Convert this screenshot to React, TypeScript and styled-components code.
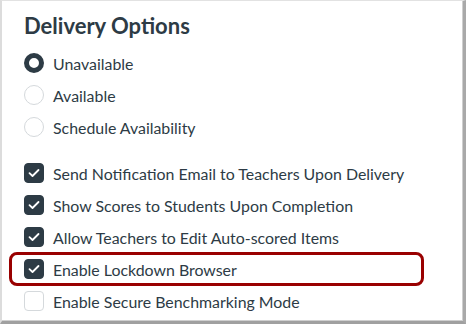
import React from "react";
import styled, { createGlobalStyle } from "styled-components";

const Global = createGlobalStyle`
  html, body { margin: 0; padding: 0; background: #ffffff; }
  body { font-family: Lato, "Noto Sans", sans-serif; }
`;

const Frame = styled.div`
  box-sizing: border-box;
  width: 466px;
  height: 324px;
  background: #fff;
  border-top: 1px solid #e2e2e2;
  border-left: 2px solid #dcdcdc;
  border-right: 3px solid #a9a9a9;
  border-bottom: 3px solid #a0a0a0;
  box-shadow: inset -1px -1px 0 #cfcfcf;
  padding: 11px 0 0 22px;
  color: #2d3b45;
  overflow: hidden;
`;

const Title = styled.h2`
  margin: 0 0 7px 0;
  font-size: 22px;
  line-height: 28px;
  font-weight: 700;
  color: #2d3b45;
`;

const Group = styled.div`
  display: flex;
  flex-direction: column;
`;

const Row = styled.div`
  display: flex;
  align-items: center;
  gap: 9px;
  height: 32px;
  font-size: 15.9px;
  color: #2d3b45;
  position: relative;
`;

const Highlight = styled.div`
  position: absolute;
  left: -15px;
  top: -1px;
  width: 415px;
  height: 34px;
  box-sizing: border-box;
  border: 3px solid #990000;
  border-radius: 8px;
  pointer-events: none;
`;

const Radio = styled.span<{ $checked?: boolean }>`
  box-sizing: border-box;
  width: 20px;
  height: 20px;
  border-radius: 50%;
  flex: none;
  border: ${(p) => (p.$checked ? "5px solid #2d3b45" : "1px solid #d5d9dc")};
  background: #fff;
`;

const Box = styled.span<{ $checked?: boolean }>`
  box-sizing: border-box;
  width: 20px;
  height: 20px;
  border-radius: 4px;
  flex: none;
  display: flex;
  align-items: center;
  justify-content: center;
  background: ${(p) => (p.$checked ? "#2d3b45" : "#fff")};
  border: 1px solid ${(p) => (p.$checked ? "#2d3b45" : "#d5d9dc")};
`;

const Spacer = styled.div`
  height: 14px;
`;

const Check = () => (
  <svg width="12" height="10" viewBox="0 0 12 10" fill="none">
    <path d="M1.5 5.2 L4.5 8 L10.5 2" stroke="#fff" strokeWidth="1.8" strokeLinecap="round" strokeLinejoin="round" />
  </svg>
);

const radios = [
  { label: "Unavailable", checked: true },
  { label: "Available", checked: false },
  { label: "Schedule Availability", checked: false },
];

const checks = [
  { label: "Send Notification Email to Teachers Upon Delivery", checked: true },
  { label: "Show Scores to Students Upon Completion", checked: true },
  { label: "Allow Teachers to Edit Auto-scored Items", checked: true },
  { label: "Enable Lockdown Browser", checked: true, highlight: true },
  { label: "Enable Secure Benchmarking Mode", checked: false },
];

export default function App() {
  return (
    <>
      <Global />
      <Frame>
        <Title>Delivery Options</Title>
        <Group>
          {radios.map((r) => (
            <Row key={r.label}>
              <Radio $checked={r.checked} />
              <span>{r.label}</span>
            </Row>
          ))}
        </Group>
        <Spacer />
        <Group>
          {checks.map((c) => (
            <Row key={c.label}>
              {c.highlight && <Highlight />}
              <Box $checked={c.checked}>{c.checked && <Check />}</Box>
              <span>{c.label}</span>
            </Row>
          ))}
        </Group>
      </Frame>
    </>
  );
}
